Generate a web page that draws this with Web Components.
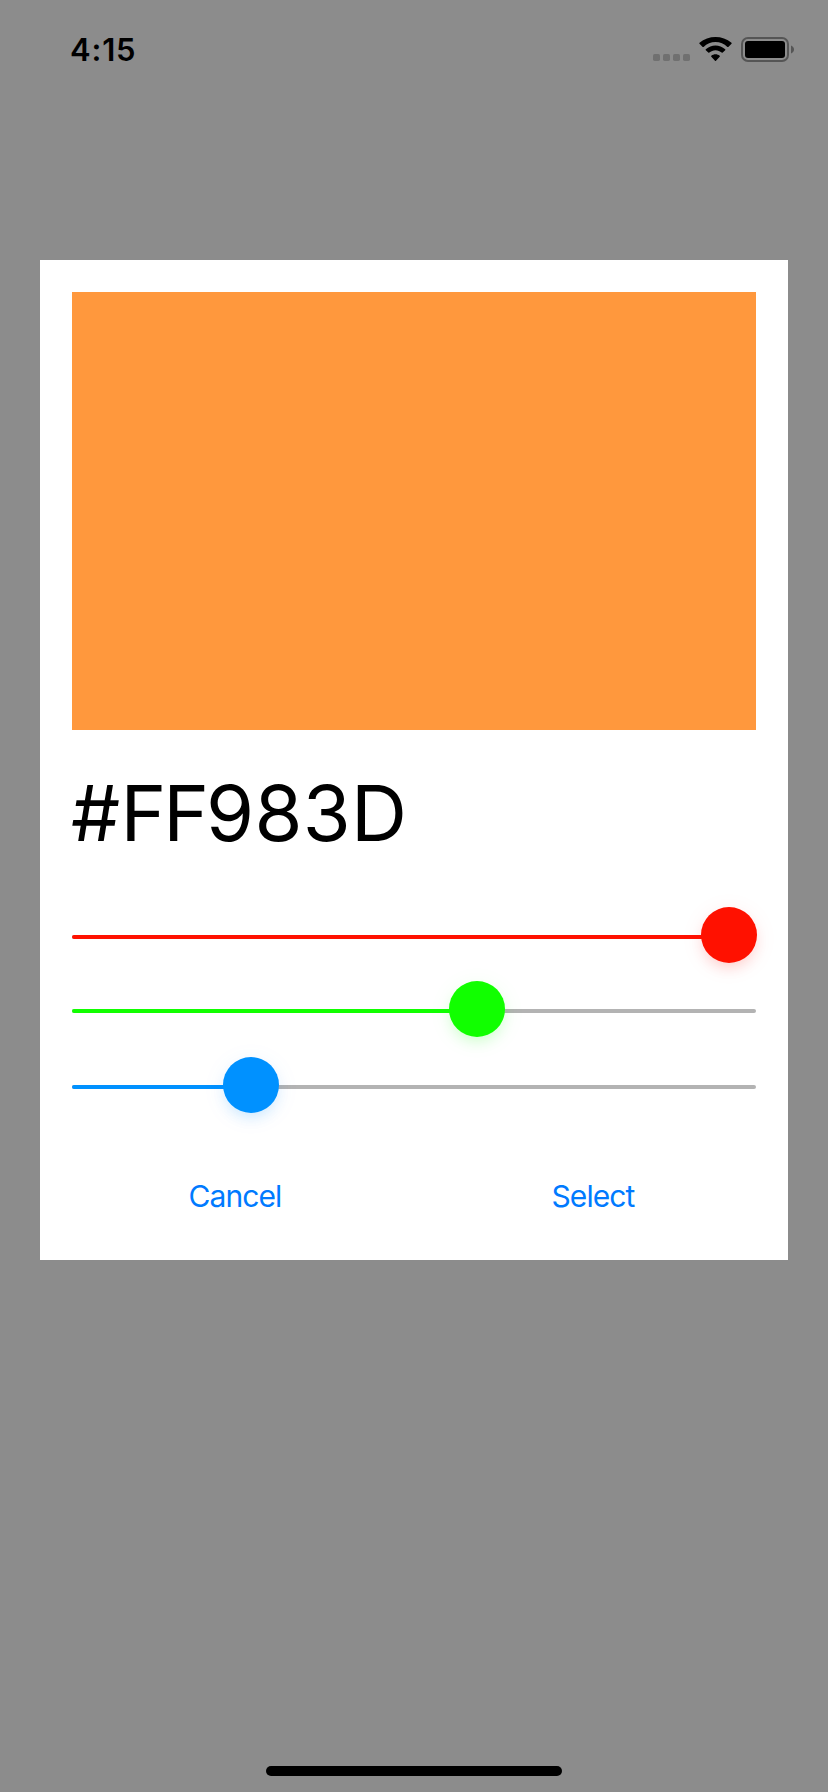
<!DOCTYPE html>
<html lang="en">
<head>
<meta charset="utf-8">
<title>Color picker</title>
<style>
html,body{margin:0;height:100%;background:#8c8c8c}
body{font-family:Inter,"Liberation Sans",sans-serif;color:#000}
</style>
</head>
<body>
<picker-screen></picker-screen>
<script>
const define = (name, html, setup) => customElements.define(name, class extends HTMLElement {
  connectedCallback() {
    if (this.shadowRoot) return;
    this.attachShadow({ mode: 'open' }).innerHTML = html;
    if (setup) setup(this);
  }
});

define('status-bar', `
<style>
:host{display:flex;justify-content:space-between;height:100px;padding:0 33px 0 70px;box-sizing:border-box}
.time{margin-top:30px;height:40px;line-height:40px;font-size:31px;font-weight:600;letter-spacing:.8px;white-space:nowrap}
.icons{display:block;margin-top:34px}
</style>
<span class="time"><slot></slot></span>
<svg class="icons" width="143" height="32" viewBox="652 34 143 32">
  <g fill="#707070"><rect x="653" y="54" width="7" height="7" rx="1.8"/><rect x="663" y="54" width="7" height="7" rx="1.8"/><rect x="673" y="54" width="7" height="7" rx="1.8"/><rect x="683" y="54" width="7" height="7" rx="1.8"/></g>
  <path d="M715.5 42.1c4.5 0 8.7 1.7 11.9 4.8.3.3.6.3.9 0l3.2-3.1c.3-.3.3-.7 0-1-8.9-7.9-23.1-7.9-32 0-.3.3-.3.7 0 1l3.2 3.1c.3.3.6.3.9 0 3.2-3.1 7.4-4.8 11.9-4.8z"/>
  <path d="M715.5 50.2c2.4 0 4.5.9 6.2 2.4.3.3.7.3 1 0l2.5-2.4c.3-.3.3-.7 0-1-5.5-5.1-13.9-5.1-19.4 0-.3.3-.3.7 0 1l2.5 2.4c.3.3.7.3 1 0 1.7-1.5 3.8-2.4 6.2-2.4z"/>
  <path d="M719.7 55.7c-2.4-2-6-2-8.4 0-.3.3-.3.7 0 1l3.7 4c.3.3.7.3 1 0l3.7-4c.3-.3.3-.7 0-1z"/>
  <rect x="742" y="38" width="46" height="23" rx="6" fill="none" stroke="#555" stroke-width="2"/>
  <rect x="745" y="41" width="40" height="17" rx="3"/>
  <path d="M791 45.5c4 1.5 4 6.5 0 8z" fill="#555"/>
</svg>`);

define('color-slider', `
<style>
:host{display:flex;position:relative;height:4px;border-radius:2px;background:#b3b3b3}
.fill{width:calc(var(--pos) + 28px);background:var(--hue);border-radius:2px}
.thumb{position:absolute;left:var(--pos);top:-28px;width:56px;height:56px;border-radius:50%;background:var(--hue);box-shadow:0 7px 14px -3px color-mix(in srgb,var(--hue) 16%,transparent),0 4px 24px color-mix(in srgb,var(--hue) 7%,transparent)}
</style>
<div class="fill"></div><div class="thumb"></div>`, el => {
  el.style.setProperty('--hue', el.getAttribute('hue'));
  el.style.setProperty('--pos', el.getAttribute('offset') + 'px');
});

define('text-button', `
<style>
:host{display:flex;justify-content:center}
button{all:unset;font:400 30px/40px Inter,"Liberation Sans",sans-serif;letter-spacing:-.9px;color:#007aff;white-space:nowrap}
</style>
<button><slot></slot></button>`);

define('color-dialog', `
<style>
:host{display:flex;flex-direction:column;height:1000px;box-sizing:border-box;padding:32px;margin:0 40px;background:#fff}
.swatch{height:438px;background:#ff983d}
.hex{margin:33px 0 0 -1px;height:100px;line-height:100px;font-size:77.6px;letter-spacing:.3px;white-space:nowrap}
.tight{letter-spacing:-3px}
.sliders{display:flex;flex-direction:column;margin-top:72px}
.sliders color-slider:nth-child(2){margin-top:70px}
.sliders color-slider:nth-child(3){margin-top:72px}
.actions{display:grid;grid-template-columns:1fr 1fr;gap:32px;margin-top:87px}
</style>
<div class="swatch"></div>
<div class="hex">#<span class="tight">FF</span>983D</div>
<div class="sliders">
  <color-slider hue="#ff1100" offset="629"></color-slider>
  <color-slider hue="#11ff00" offset="377"></color-slider>
  <color-slider hue="#0091ff" offset="151"></color-slider>
</div>
<div class="actions"><text-button>Cancel</text-button><text-button>Select</text-button></div>`);

define('home-indicator', `
<style>
:host{display:block;width:296px;height:10px;border-radius:5px;background:#000;margin:auto auto 16px}
</style>`);

define('picker-screen', `
<style>
:host{display:flex;flex-direction:column;height:1792px;background:#8c8c8c;overflow:hidden}
status-bar{margin-bottom:160px}
</style>
<status-bar>4:15</status-bar>
<color-dialog></color-dialog>
<home-indicator></home-indicator>`);
</script>
</body>
</html>
